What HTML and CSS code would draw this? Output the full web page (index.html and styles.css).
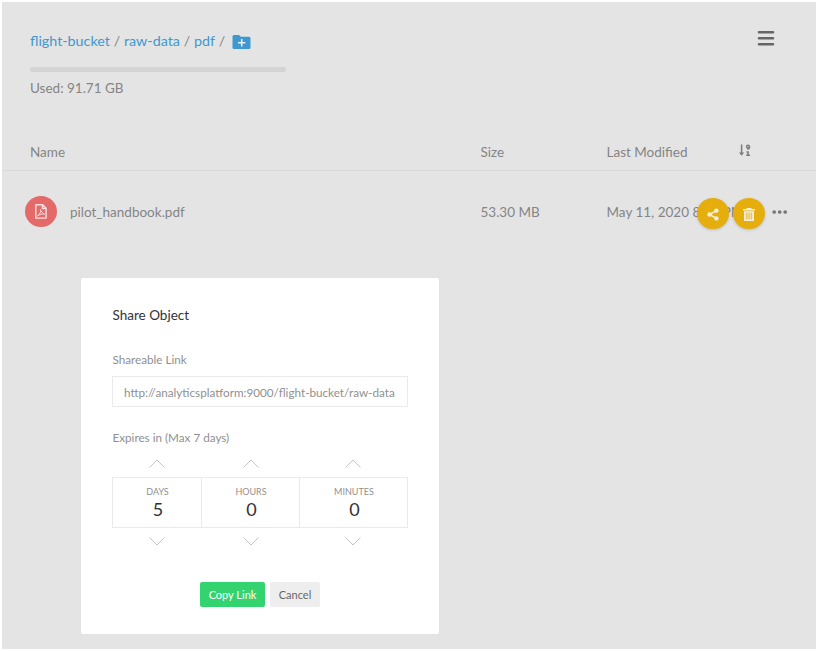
FILE: index.html
```html
<!DOCTYPE html>
<html lang="en">
<head>
<meta charset="utf-8">
<title>Object Browser</title>
<link rel="stylesheet" href="styles.css">
</head>
<body>
<div class="app">
  <header class="header">
    <div class="location">
      <nav class="breadcrumb">
        <a>flight-bucket</a><span class="sep">/</span><a>raw-data</a><span class="sep">/</span><a>pdf</a><span class="sep">/</span>
        <svg class="folder" viewBox="0 0 18 14"><path fill="#3f98d0" d="M1.5 0h5l1.800 1.700h8.200q1.500 0 1.500 1.500v9.300q0 1.500-1.500 1.500h-15q-1.500 0-1.500-1.500v-11q0-1.500 1.500-1.500z"/><path stroke="#e8eef2" stroke-width="1.600" d="M9.200 4v7.400M5.500 7.700h7.400"/></svg>
      </nav>
      <div class="usage-bar"></div>
      <div class="usage">Used: 91.71 GB</div>
    </div>
    <svg class="menu" viewBox="0 0 18 16"><path stroke="#666" stroke-width="2.600" stroke-linecap="round" d="M2 2.200h14M2 8.200h14M2 14.200h14"/></svg>
  </header>
  <div class="row head">
    <div>Name</div><div>Size</div><div>Last Modified</div>
    <svg class="sort" viewBox="0 0 12 13"><path stroke="#7c7c7c" stroke-width="1.500" d="M2.600 .5v9"/><path fill="#7c7c7c" d="M0 8.400h5.200L2.600 11.800z"/><circle cx="9" cy="2.700" r="1.400" fill="none" stroke="#7c7c7c" stroke-width="1.500"/><path fill="none" stroke="#7c7c7c" stroke-width="1.500" d="M10.500 2.700q.1 2-2.200 2.600M7.400 8h1.700v3.600M7.200 11.200h3.800"/></svg>
  </div>
  <div class="row item">
    <div class="name">
      <span class="file-icon"><svg viewBox="0 0 12 15"><path fill="none" stroke="#f4dede" stroke-width="1.400" stroke-linejoin="round" d="M.8.8h6.800l3.500 3.500v9.800H.8zM7.400.9v3.600h3.700"/><path fill="none" stroke="#f4dede" stroke-width=".9" d="M5.300 5.500q1 3 4.200 4.700Q6 9.500 3 11.300q-.5.500-.4.800 1.200.1 3-4.200.6-1.700-.3-2.400"/></svg></span>
      <span>pilot_handbook.pdf</span>
    </div>
    <div>53.30 MB</div>
    <div class="date">May 11, 2020 8:30 PM</div>
    <svg class="dots" viewBox="0 0 16 4"><g fill="#777"><circle cx="2.200" cy="2" r="1.850"/><circle cx="7.700" cy="2" r="1.850"/><circle cx="13.200" cy="2" r="1.850"/></g></svg>
    <div class="actions">
      <button class="round"><svg viewBox="0 0 12 13"><path fill="none" stroke="#f3efe2" stroke-width="1.500" d="M9.300 2.700L2.700 6.500l6.600 3.800"/><g fill="#f3efe2"><circle cx="9.400" cy="2.600" r="2.200"/><circle cx="2.500" cy="6.500" r="2.200"/><circle cx="9.400" cy="10.400" r="2.200"/></g></svg></button>
      <button class="round"><svg viewBox="0 0 12 13"><path fill="#f3efe2" d="M3.500 1V0h5v1H12v1.600H0V1zM1 3.200h10V13H1z"/><path stroke="#e5ae0c" stroke-width=".8" d="M3.300 4.600v6.900M5.100 4.600v6.900M6.900 4.600v6.900M8.700 4.600v6.900"/></svg></button>
    </div>
  </div>
  <section class="modal">
    <h2>Share Object</h2>
    <label>Shareable Link</label>
    <div class="link">http://analyticsplatform:9000/flight-bucket/raw-data</div>
    <label class="expires">Expires in (Max 7 days)</label>
    <div class="arrows"><svg viewBox="0 0 16 9"><path d="M.5 8.500L8 1l7.500 7.500"/></svg><svg viewBox="0 0 16 9"><path d="M.5 8.500L8 1l7.500 7.500"/></svg><svg viewBox="0 0 16 9"><path d="M.5 8.500L8 1l7.500 7.500"/></svg></div>
    <div class="times">
      <div><small>DAYS</small><b>5</b></div>
      <div><small>HOURS</small><b>0</b></div>
      <div><small>MINUTES</small><b>0</b></div>
    </div>
    <div class="arrows down"><svg viewBox="0 0 16 9"><path d="M.5.500L8 8l7.500-7.500"/></svg><svg viewBox="0 0 16 9"><path d="M.5.500L8 8l7.500-7.500"/></svg><svg viewBox="0 0 16 9"><path d="M.5.500L8 8l7.500-7.500"/></svg></div>
    <div class="buttons"><button class="copy">Copy Link</button><button class="cancel">Cancel</button></div>
  </section>
</div>
</body>
</html>
```
FILE: styles.css
```css
* { box-sizing: border-box; }
body { margin: 0; padding: 2px; background: #fff; font-family: Lato, sans-serif; color: #858585; }
svg { display: block; }
button { border: 0; padding: 0; font-family: inherit; }
.app { position: relative; height: 647px; background: #e4e4e4; font-size: 13.5px; overflow: hidden; }
.header { display: flex; justify-content: space-between; height: 133px; padding: 29px 41px 0 28px; }
.breadcrumb { display: flex; align-items: center; height: 20px; color: #3f98d0; font-size: 14.3px; line-height: 18px; }
.breadcrumb a, .sep { margin-top: -1px; }
.sep { margin-left: 3.800px; margin-right: 3.800px; color: #858585; }
.folder { width: 19px; height: 14px; margin: 1px 0 0 3px; }
.usage-bar { width: 256px; height: 5px; margin-top: 16px; border-radius: 2px; background: #d4d4d4; }
.usage { margin-top: 6px; line-height: 20px; }
.menu { width: 18px; height: 16px; margin-top: -1px; }
.row { display: grid; grid-template-columns: 450.5px 126px 132px 1fr; padding-left: 28px; align-items: center; }
.head { height: 36px; padding-bottom: 2px; border-bottom: 1px solid #d8d8d8; }
.sort { width: 12px; height: 13px; margin: -3px 0 0 0; }
.item { position: relative; height: 82px; }
.name { display: flex; align-items: center; gap: 13px; margin-left: -5px; }
.file-icon { display: flex; align-items: center; justify-content: center; width: 32px; height: 31px; margin-top: -1px; border-radius: 50%; background: #e46a6a; }
.file-icon svg { width: 12px; height: 15px; }
.date { white-space: nowrap; }
.dots { width: 16px; height: 4px; margin-left: 33px; }
.actions { position: absolute; left: 695px; top: 27px; display: flex; gap: 4px; }
.round { display: flex; align-items: center; justify-content: center; width: 32px; height: 31px; border-radius: 50%; background: #e5ae0c; box-shadow: 0 1px 3px rgba(0, 0, 0, .18); }
.round svg { width: 12px; height: 13px; margin-top: 1px; }
.modal { position: absolute; left: 79px; top: 276px; width: 358px; height: 356px; padding: 27px 31px 0; border-radius: 2px; background: #fff; color: #909090; }
.modal h2 { margin: 0; color: #333; font-size: 13.5px; line-height: 20px; font-weight: 400; }
.modal h2, .modal label { padding-left: .5px; }
.modal label { display: block; margin-top: 25px; font-size: 11.7px; line-height: 18px; }
.link { height: 31px; margin-top: 8px; padding-left: 11px; border: 1px solid #eaeaea; font-size: 11.7px; line-height: 31px; white-space: nowrap; }
.modal .expires { margin-top: 21px; }
.arrows { display: grid; grid-template-columns: 89px 99px 105px; justify-items: center; margin-top: 13px; }
.arrows svg { width: 16px; height: 9px; fill: none; stroke: #c4c4c4; stroke-width: 1; }
.times { display: grid; grid-template-columns: 88px 98px 1fr; height: 51px; margin-top: 9px; border: 1px solid #eaeaea; text-align: center; }
.times div + div { border-left: 1px solid #eaeaea; }
.times small { display: block; margin-top: 8px; padding-left: 1px; font-size: 9px; line-height: 12px; }
.times b { display: block; padding-left: 2px; color: #333; font-size: 18px; line-height: 23px; font-weight: 400; }
.arrows.down { margin-top: 9px; }
.buttons { display: flex; justify-content: center; gap: 5px; margin-top: 36px; }
.buttons button { height: 25px; border-radius: 2px; font-size: 11px; }
.copy { width: 65px; background: #33d46f; color: #fff; }
.cancel { width: 50px; background: #eee; color: #666; }
```
